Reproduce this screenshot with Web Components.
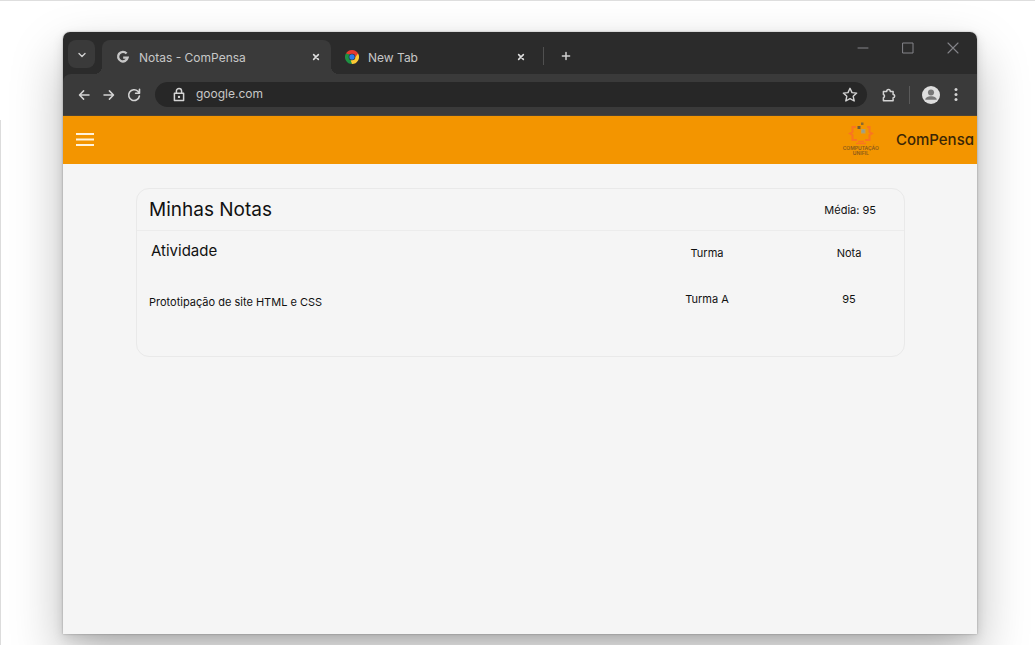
<!DOCTYPE html>
<html lang="pt-BR">
<head>
<meta charset="utf-8">
<meta name="viewport" content="width=device-width, initial-scale=1">
<title>Notas - ComPensa</title>
<style>
  body { margin: 0; background: #fff; font-family: Inter, "Liberation Sans", sans-serif; }
</style>
</head>
<body>
<page-stage>
  <browser-window>
    <tab-strip slot="tabs">
      <browser-tab active icon="google">Notas - ComPensa</browser-tab>
      <browser-tab icon="chrome">New Tab</browser-tab>
    </tab-strip>
    <nav-toolbar slot="toolbar" address="google.com"></nav-toolbar>
    <app-bar></app-bar>
    <grades-card></grades-card>
  </browser-window>
</page-stage>

<script>
const define = (name, html, setup) => {
  const template = document.createElement('template');
  template.innerHTML = html;
  customElements.define(name, class extends HTMLElement {
    constructor() {
      super();
      this.attachShadow({ mode: 'open' }).append(template.content.cloneNode(true));
    }
    connectedCallback() { if (setup) setup(this, this.shadowRoot); }
  });
};

const line = (d, w = 1.5) =>
  `<path d="${d}" fill="none" stroke="currentColor" stroke-width="${w}" stroke-linecap="round" stroke-linejoin="round"/>`;

const icons = {
  chevron: line('M5 7.4l3 3 3-3', 1.4),
  back: line('M13 8H3.6M7.6 3.9L3.5 8l4.1 4.1', 1.5),
  forward: line('M3 8h9.4M8.4 3.9L12.5 8l-4.1 4.1', 1.5),
  reload: line('M13.4 9A5.4 5.4 0 1 1 11.9 4.300L13.300 5.700M13.500 2.300v3.900H9.600', 1.6),
  lock: line('M3.4 6.3h9.2v7.2H3.400zM5.4 6V4a2.600 2.600 0 0 1 5.200 0V6', 1.5) + '<circle cx="8" cy="9.900" r="1.2" fill="currentColor"/>',
  star: line('M8 1.300l2 4.300 4.700.5-3.500 3.200 1 4.700-4.200-2.400-4.200 2.400 1-4.700-3.500-3.200 4.700-.5z', 1.4),
  puzzle: line('M2.4 4.4h3.3a1.8 1.8 0 0 1 3.6 0h2.8v3.1a1.6 1.6 0 0 1 0 3.2v3.1H2.4v-3.1a1.7 1.7 0 0 0 0-3.2z', 1.5),
  dots: '<g fill="currentColor"><circle cx="8" cy="2.500" r="1.5"/><circle cx="8" cy="7.500" r="1.5"/><circle cx="8" cy="12.500" r="1.5"/></g>',
  avatar: '<circle cx="8" cy="8" r="8" fill="#dedede"/><g fill="#777"><circle cx="8" cy="5.700" r="2.700"/><path d="M2.900 12.200c0-2 2.300-3.100 5.100-3.100s5.100 1.100 5.100 3.100z"/></g>',
  close: line('M5.300 5.300l5.400 5.400M10.700 5.300l-5.400 5.400', 1.8),
  plus: line('M8 4.400v7.200M4.400 8h7.200', 1.5),
  minimize: line('M3 8h10', 1),
  maximize: line('M3 3h10v10H3z', 1),
  quit: line('M3 3l10 10M13 3L3 13', 1.1),
  menu: '<path d="M0 1.800h16v1.800H0zM0 6.700h16v1.800H0zM0 11.600h16v1.800H0z" fill="currentColor"/>',
  google: '<path d="M12.100 4A5.500 5.500 0 1 0 13.300 8.700H8.200" fill="none" stroke="currentColor" stroke-width="2.700"/>',
  chrome: '<path d="M8 8L1.070 4A8 8 0 0 1 14.930 4z" fill="#e33b2e"/><path d="M8 8l6.930-4A8 8 0 0 1 8 16z" fill="#fcc934"/><path d="M8 8v8A8 8 0 0 1 1.070 4z" fill="#1e9143"/><path d="M8 4h6.930l-3 4z" fill="#e33b2e"/><path d="M11.500 10L8 16l-1.500-4z" fill="#fcc934"/><path d="M4.500 10L1.070 4l4.500 1z" fill="#1e9143"/><circle cx="8" cy="8" r="3.800" fill="#2b2b2b"/><circle cx="8" cy="8" r="3.100" fill="#2d7bea"/>'
};

define('ui-icon', `
  <style>
    :host { display: block; flex: none; width: 16px; height: 16px; }
    svg { display: block; width: 100%; height: 100%; }
  </style>
  <svg viewBox="0 0 16 16" aria-hidden="true"></svg>`,
  (el, root) => { root.querySelector('svg').innerHTML = icons[el.getAttribute('name')] || ''; });

define('page-stage', `
  <style>
    :host {
      display: flex; flex-direction: column; box-sizing: border-box; min-height: 100vh;
      padding: 31px 58px 11px 63px; border-top: 1px solid #dedede; overflow: hidden;
      background: linear-gradient(#dcdcdc, #dcdcdc) 0 119px / 1px 100% no-repeat;
    }
    ::slotted(*) { flex: 1; }
  </style>
  <slot></slot>`);

define('browser-window', `
  <style>
    :host {
      display: flex; flex-direction: column; background: #f5f5f5; border-radius: 7px 7px 0 0;
      box-shadow: 0 0 2px rgba(0,0,0,.35), 0 4px 12px rgba(0,0,0,.12), 0 24px 52px rgba(0,0,0,.27);
    }
    main { flex: 1; }
  </style>
  <slot name="tabs"></slot>
  <slot name="toolbar"></slot>
  <main><slot></slot></main>`);

define('tab-strip', `
  <style>
    :host {
      display: flex; height: 42px; box-sizing: border-box; padding: 8px 16px 0 5px;
      background: #2b2b2b; border-radius: 7px 7px 0 0; color: #d0d0d0;
    }
    button { display: grid; place-items: center; padding: 0; border: 0; background: none; color: inherit; }
    .search { width: 27px; height: 28px; margin-right: 7px; border-radius: 8px; background: #3a3a3a; }
    .tabs { display: flex; }
    .rule { width: 1px; height: 18px; margin: 7px 14px 0 7px; background: #505050; }
    .add { width: 16px; height: 32px; }
    .controls { display: flex; gap: 29px; margin-left: auto; color: #85858a; }
    .controls button { width: 16px; height: 16px; }
  </style>
  <button class="search" aria-label="Search tabs"><ui-icon name="chevron"></ui-icon></button>
  <div class="tabs" role="tablist"><slot></slot></div>
  <span class="rule"></span>
  <button class="add" aria-label="New tab"><ui-icon name="plus"></ui-icon></button>
  <div class="controls">
    <button aria-label="Minimize"><ui-icon name="minimize"></ui-icon></button>
    <button aria-label="Maximize"><ui-icon name="maximize"></ui-icon></button>
    <button aria-label="Close window"><ui-icon name="quit"></ui-icon></button>
  </div>`);

define('browser-tab', `
  <style>
    :host {
      position: relative; display: flex; align-items: center; gap: 9px; box-sizing: border-box;
      width: 205px; height: 34px; padding: 0 8px 0 14px; font-size: 12px; color: #c7c7c7;
    }
    :host([active]) { width: 229px; border-radius: 8px 8px 0 0; background: #3a3a3a; }
    :host([active])::before, :host([active])::after {
      content: ""; position: absolute; bottom: 0; width: 8px; height: 8px;
    }
    :host([active])::before { right: 100%; background: radial-gradient(circle at 0 0, transparent 8px, #3a3a3a 8px); }
    :host([active])::after { left: 100%; background: radial-gradient(circle at 100% 0, transparent 8px, #3a3a3a 8px); }
    .favicon { width: 14px; height: 14px; }
    .label { flex: 1; white-space: nowrap; }
    button { padding: 0; border: 0; background: none; color: #dedede; }
    button ui-icon { width: 14px; height: 14px; }
  </style>
  <ui-icon class="favicon"></ui-icon>
  <span class="label"><slot></slot></span>
  <button aria-label="Close tab"><ui-icon name="close"></ui-icon></button>`,
  (el, root) => {
    root.querySelector('.favicon').setAttribute('name', el.getAttribute('icon'));
    root.querySelector('.favicon').connectedCallback();
    el.setAttribute('role', 'tab');
    el.setAttribute('aria-selected', el.hasAttribute('active'));
  });

define('nav-toolbar', `
  <style>
    :host { display: block; background: #2b2b2b; color: #d4d4d4; }
    .bar {
      display: flex; align-items: center; height: 42px; box-sizing: border-box; padding: 0 13px;
      border-radius: 8px 0 0 0; background: #3a3a3a; border-bottom: 1px solid #4c4335;
    }
    button { padding: 0; border: 0; background: none; color: inherit; }
    nav { display: flex; gap: 9px; }
    .field {
      flex: 1; display: flex; align-items: center; gap: 9px; height: 25px; box-sizing: border-box;
      margin: 0 14px 0 13px; padding: 0 9px 0 16px; border-radius: 13px; background: #272727;
    }
    input {
      flex: 1; min-width: 0; height: 20px; padding: 0 0 2px; box-sizing: border-box; border: 0; outline: 0; background: none;
      font: 12px/18px Inter, "Liberation Sans", sans-serif; color: #c7c7c7;
    }
    .rule { width: 1px; height: 18px; margin: 0 12px; background: #5a5a5a; }
    .avatar { width: 18px; height: 18px; margin-right: 8px; }
    .avatar ui-icon { width: 18px; height: 18px; }
  </style>
  <div class="bar">
    <nav>
      <button aria-label="Back"><ui-icon name="back"></ui-icon></button>
      <button aria-label="Forward"><ui-icon name="forward"></ui-icon></button>
      <button aria-label="Reload"><ui-icon name="reload"></ui-icon></button>
    </nav>
    <div class="field">
      <ui-icon name="lock"></ui-icon>
      <input type="text" aria-label="Address">
      <button aria-label="Bookmark"><ui-icon name="star"></ui-icon></button>
    </div>
    <button aria-label="Extensions"><ui-icon name="puzzle"></ui-icon></button>
    <span class="rule"></span>
    <button class="avatar" aria-label="Profile"><ui-icon name="avatar"></ui-icon></button>
    <button aria-label="Menu"><ui-icon name="dots"></ui-icon></button>
  </div>`,
  (el, root) => { root.querySelector('input').value = el.getAttribute('address'); });

define('course-logo', `
  <style>
    :host { display: flex; flex-direction: column; align-items: center; color: #8b5a1c; font-size: 5px; line-height: 5px; font-weight: 600; text-align: center; }
    svg { display: block; width: 26px; height: 25px; }
  </style>
  <svg viewBox="0 0 26 25" aria-hidden="true">
    <g fill="none" stroke="#fa7520" stroke-width="2">
      <path d="M8 6H4.500v5L2 12.500 4.500 14v5H9M19 6h2.500v5l2.500 1.500-2.500 1.500v5H17"/>
      <path d="M10 20.500h6M8 22.500h10" stroke-width="1.500"/>
    </g>
    <path d="M9.500 5H12.500v3H9.500z" fill="#6f5b35"/>
    <path d="M13 1.500h2.500v2.500H13z" fill="#8a6a30"/>
    <path d="M13 8h4.500v4.500H13z" fill="#b5a06a"/>
    <path d="M14.200 9.200h2v2h-2z" fill="#8fa09a"/>
  </svg>
  <span>COMPUTAÇÃO</span><span>UNIFIL</span>`);

define('app-bar', `
  <style>
    :host {
      display: flex; align-items: center; height: 48px; box-sizing: border-box;
      padding: 0 3px 0 13px; background: #f39500;
    }
    button { padding: 0; border: 0; background: none; color: #fff3dc; }
    button ui-icon { width: 18px; height: 18px; }
    course-logo { margin: 0 17px 3px auto; }
    .brand { font-size: 15px; line-height: 24px; font-weight: 500; font-feature-settings: "cv11"; color: #3a2606; }
  </style>
  <button aria-label="Abrir menu"><ui-icon name="menu"></ui-icon></button>
  <course-logo></course-logo>
  <span class="brand">ComPensa</span>`);

define('grades-card', `
  <style>
    :host { display: block; padding: 24px 72px 24px 73px; color: #111; }
    section { border: 1px solid #e9e9e9; border-radius: 13px; padding-bottom: 32px; }
    header {
      display: flex; align-items: center; justify-content: space-between; height: 42px;
      box-sizing: border-box; padding: 0 28px 0 12px; border-bottom: 1px solid #ececec;
    }
    h1 { margin: 0; font-size: 19px; line-height: 24px; font-weight: 400; }
    header span { font-size: 11px; line-height: 16px; }
    table { width: 100%; border-collapse: collapse; table-layout: fixed; font-size: 11px; line-height: 16px; }
    th, td { padding: 0; font-weight: 400; text-align: center; vertical-align: top; }
    th { height: 46px; box-sizing: border-box; padding-top: 14px; }
    td { height: 47px; box-sizing: border-box; padding-top: 14px; }
    th:first-child { padding: 9px 0 0 14px; font-size: 15px; line-height: 22px; text-align: left; }
    td:first-child { padding: 17px 0 0 12px; text-align: left; }
    .group { width: 174px; }
    .grade { width: 110px; }
  </style>
  <section>
    <header><h1>Minhas Notas</h1><span>Média: 95</span></header>
    <table>
      <colgroup><col><col class="group"><col class="grade"></colgroup>
      <thead><tr><th scope="col">Atividade</th><th scope="col">Turma</th><th scope="col">Nota</th></tr></thead>
      <tbody><tr><td>Prototipação de site HTML e CSS</td><td>Turma A</td><td>95</td></tr></tbody>
    </table>
  </section>`);
</script>
</body>
</html>
